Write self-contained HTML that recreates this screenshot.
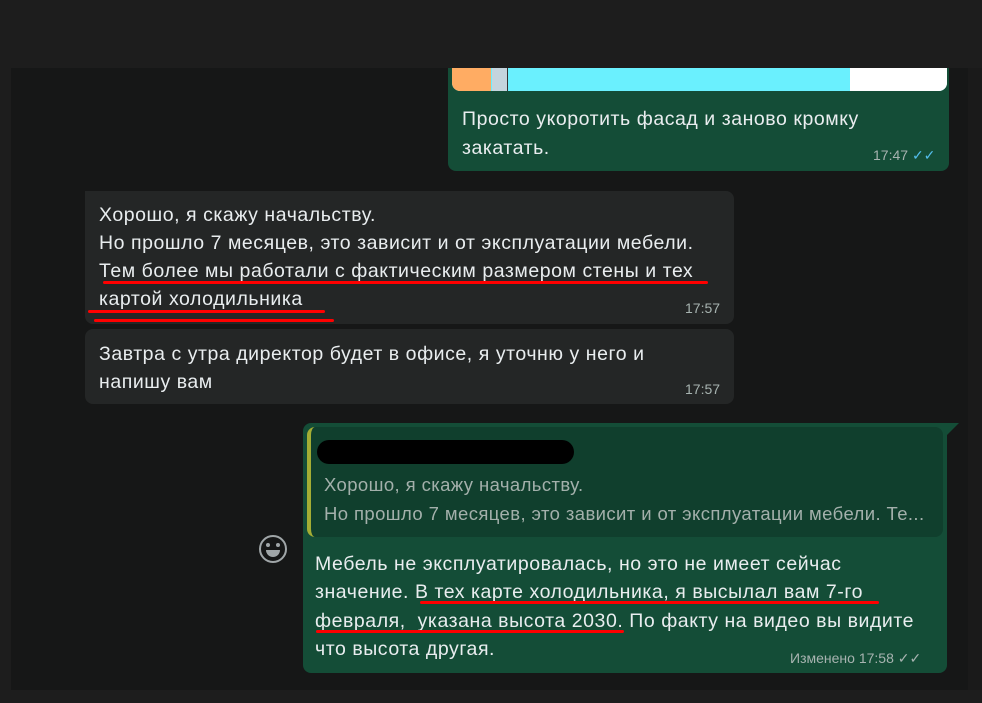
<!DOCTYPE html>
<html><head><meta charset="utf-8"><style>
*{margin:0;padding:0;box-sizing:border-box}
body{width:982px;height:703px;background:#1d1d1d;position:relative;overflow:hidden;font-family:"Liberation Sans",sans-serif;color:#e9edef}
.chat{position:absolute;left:11px;top:68px;width:957px;height:622px;background:#161717}
.b{position:absolute;border-radius:8px}
.g{background:#144d37}
.d{background:#242626}
.t{position:absolute;font-size:19.5px;line-height:28.5px;white-space:nowrap;letter-spacing:0.55px}
.tm{position:absolute;font-size:14px;color:#a7b3b0;white-space:nowrap}
.ul{position:absolute;height:3px;background:#f00;border-radius:2px}
</style></head><body>
<div class="chat"></div>
<div style="position:absolute;left:968px;top:68px;width:14px;height:622px;background:#1a1a1a"></div>

<div class="b g" style="left:448px;top:68px;width:501px;height:103px;border-radius:0 0 8px 8px"></div>
<div style="position:absolute;left:452px;top:68px;width:495px;height:23px;border-radius:0 0 8px 8px;overflow:hidden;background:#6af0fe">
<div style="position:absolute;left:0;top:0;width:39px;height:23px;background:#ffac63"></div>
<div style="position:absolute;left:40px;top:0;width:15px;height:23px;background:#c4d4dd"></div>
<div style="position:absolute;left:55px;top:0;width:1px;height:23px;background:#333"></div>
<div style="position:absolute;left:398px;top:0;width:97px;height:23px;background:#fff"></div>
</div>
<div class="t" style="left:462px;top:105px">Просто укоротить фасад и заново кромку</div>
<div class="t" style="left:462px;top:134px">закатать.</div>
<div class="tm" style="left:873px;top:147px">17:47 <span style="color:#53bdeb">✓✓</span></div>

<div class="b d" style="left:85px;top:191px;width:649px;height:133px;border-radius:0 8px 8px 8px"></div>
<div class="t" style="left:99px;top:201px">Хорошо, я скажу начальству.</div>
<div class="t" style="left:99px;top:229px">Но прошло 7 месяцев, это зависит и от эксплуатации мебели.</div>
<div class="t" style="left:99px;top:257px">Тем более мы работали с фактическим размером стены и тех</div>
<div class="t" style="left:99px;top:285px">картой холодильника</div>
<div class="tm" style="left:685px;top:300px">17:57</div>
<div class="ul" style="left:103px;top:281px;width:605px"></div>
<div class="ul" style="left:88px;top:310px;width:237px"></div>
<div class="ul" style="left:94px;top:319px;width:240px"></div>

<div class="b d" style="left:85px;top:329px;width:649px;height:75px"></div>
<div class="t" style="left:99px;top:340px">Завтра с утра директор будет в офисе, я уточню у него и</div>
<div class="t" style="left:99px;top:368px">напишу вам</div>
<div class="tm" style="left:685px;top:381px">17:57</div>

<div style="position:absolute;left:259px;top:535px;width:28px;height:28px;border:2.5px solid #a0a6a8;border-radius:50%"></div>
<div style="position:absolute;left:266px;top:543px;width:4px;height:4px;background:#a0a6a8;border-radius:50%"></div>
<div style="position:absolute;left:276px;top:543px;width:4px;height:4px;background:#a0a6a8;border-radius:50%"></div>
<div style="position:absolute;left:266px;top:550px;width:14px;height:7px;border-radius:0 0 7px 7px;background:#a0a6a8"></div>

<div class="b g" style="left:303px;top:423px;width:644px;height:250px;border-radius:8px 0 8px 8px"></div>
<div style="position:absolute;left:947px;top:423px;border-top:12px solid #144d37;border-right:12px solid transparent"></div>
<div class="b" style="left:307px;top:427px;width:636px;height:110px;background:#103f2d;border-left:4px solid #a4ad34"></div>
<div style="position:absolute;left:317px;top:440px;width:257px;height:24px;background:#000;border-radius:12px"></div>
<div class="t" style="left:324px;top:471px;font-size:18.5px;letter-spacing:0.4px;color:#a3b0ab">Хорошо, я скажу начальству.</div>
<div class="t" style="left:324px;top:500px;font-size:18.5px;letter-spacing:0.4px;color:#a3b0ab">Но прошло 7 месяцев, это зависит и от эксплуатации мебели. Те...</div>
<div class="t" style="left:315px;top:550px">Мебель не эксплуатировалась, но это не имеет сейчас</div>
<div class="t" style="left:315px;top:578px">значение. В тех карте холодильника, я высылал вам 7-го</div>
<div class="t" style="left:315px;top:607px">февраля,&nbsp; указана высота 2030. По факту на видео вы видите</div>
<div class="t" style="left:315px;top:635px">что высота другая.</div>
<div class="tm" style="left:790px;top:650px">Изменено 17:58 ✓✓</div>
<div class="ul" style="left:420px;top:601px;width:459px"></div>
<div class="ul" style="left:316px;top:630px;width:308px"></div>
</body></html>
